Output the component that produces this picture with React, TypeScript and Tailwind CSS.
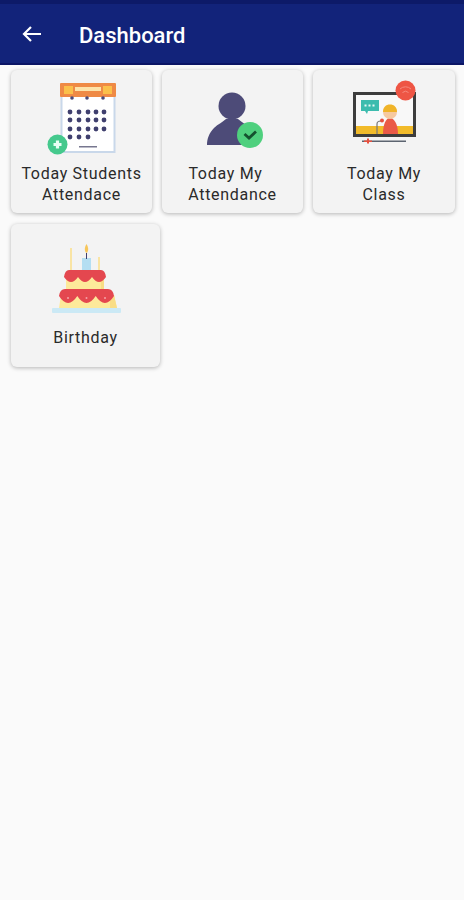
import { ReactNode } from "react";

function CalendarIcon() {
  const dots: [number, number][] = [];
  [112, 120, 129].forEach((y) => {
    [69, 78, 87, 95, 103].forEach((x) => dots.push([x, y]));
  });
  [69, 78, 87].forEach((x) => dots.push([x, 137]));
  return (
    <svg viewBox="31 82 100 80" className="w-[100px] h-[80px]">
      <rect x="60.500" y="90" width="53" height="62" fill="#fff" stroke="#c9d8ea" strokeWidth="2" />
      <rect x="59" y="83" width="56" height="14" rx="1" fill="#ef8a45" />
      <rect x="63" y="86" width="9" height="8" fill="#fbc04a" />
      <rect x="102" y="86" width="9" height="8" fill="#fbc04a" />
      <rect x="74" y="87" width="26" height="4" fill="#fde3a8" />
      <circle cx="71" cy="98" r="1.800" fill="#4a4a78" />
      <circle cx="86" cy="98" r="1.800" fill="#4a4a78" />
      <circle cx="102" cy="98" r="1.800" fill="#4a4a78" />
      {dots.map(([x, y]) => (
        <circle key={`${x}-${y}`} cx={x} cy={y} r="2.400" fill="#3f3f6e" />
      ))}
      <rect x="78" y="146" width="18" height="1.500" fill="#77778f" />
      <circle cx="56.500" cy="144.500" r="10" fill="#45c98d" />
      <path d="M56.500 140.500v8M52.500 144.500h8" stroke="#e9fff5" strokeWidth="3.200" />
    </svg>
  );
}

function PersonIcon() {
  return (
    <svg viewBox="182 82 100 80" className="w-[100px] h-[80px]">
      <ellipse cx="231" cy="106" rx="13.500" ry="13.500" fill="#4d4b78" />
      <path d="M206 145c0-6 2-12 7-17c4-4 9-6 12-9h12c3 3 8 5 12 9c5 5 5 11 5 17z" fill="#4d4b78" />
      <circle cx="249" cy="135" r="13" fill="#4fd07e" />
      <path d="M243.500 134l4.500 4 7-6.500" fill="none" stroke="#14522f" strokeWidth="2.800" />
    </svg>
  );
}

function ClassIcon() {
  return (
    <svg viewBox="334 82 100 80" className="w-[100px] h-[80px] overflow-visible">
      <rect x="354.500" y="93.500" width="60" height="42" fill="#f8f8f8" stroke="#3d3d3d" strokeWidth="3" />
      <rect x="356" y="126" width="57" height="8" fill="#f2bb2a" />
      <path d="M361 100h18v11h-11l-1 3-2-3h-4z" fill="#3cbcae" />
      <path d="M364.500 105.500h11" stroke="#e8f8f5" strokeWidth="2" strokeDasharray="2 2" />
      <path d="M383 134c0-10 3-16 7-16s8 6 8 16z" fill="#ea5a47" />
      <circle cx="390" cy="112" r="7" fill="#f6c9a0" />
      <path d="M383 112c0-5 3-7.500 7-7.500s7 2.500 7 7.500z" fill="#f0b429" />
      <path d="M377 134v-10c0-3 3-3 4-3" fill="none" stroke="#777" strokeWidth="1.200" />
      <circle cx="382" cy="120.500" r="2" fill="#e8503f" />
      <rect x="362" y="140.500" width="44" height="1.500" fill="#5c6470" />
      <rect x="367" y="138.500" width="2" height="5" fill="#e8503f" />
      <rect x="364" y="140.500" width="8" height="1.500" fill="#e8503f" />
      <circle cx="405.500" cy="90.500" r="10" fill="#ee5544" />
      <path d="M400 89a8 8 0 0 1 11 0M402.500 92.500a4.500 4.500 0 0 1 6 0" fill="none" stroke="#f58a7d" strokeWidth="1" />
    </svg>
  );
}

function CakeIcon() {
  return (
    <svg viewBox="36 236 100 80" className="w-[100px] h-[80px]">
      <path d="M71 248v22M99 257v13" stroke="#fbe08a" strokeWidth="1.500" />
      <rect x="82" y="258" width="9" height="13" fill="#b4def2" />
      <path d="M86.500 253v6" stroke="#3f3f6e" strokeWidth="1" />
      <path d="M86.500 244c2 3 2.500 7 0 9c-2.500-2-2-6 0-9z" fill="#f7c65a" />
      <path d="M66 276h38v15H66z" fill="#fde99a" />
      <path d="M61 295h53l3 13H59z" fill="#fde99a" />
      <path d="M101 276h3v15h-3zM110 295h4l3 13h-7z" fill="#f9dd85" />
      <path d="M64 277Q65 270 69 270H101Q105 270 106 277Q99 287 92 277Q85 287 78 277Q71 287 64 277z" fill="#e4474f" />
      <path d="M59 296Q60 289 65 289H108Q113 289 114 296Q105 310 95.700 296Q86.500 310 77.300 296Q68 310 59 296z" fill="#e4474f" />
      <circle cx="68" cy="298" r="1" fill="#f4a2a6" />
      <circle cx="86.500" cy="298" r="1" fill="#f4a2a6" />
      <circle cx="105" cy="298" r="1" fill="#f4a2a6" />
      <rect x="52" y="308" width="69" height="5" rx="1" fill="#cbe9f5" />
    </svg>
  );
}

function Card({ icon, lines, w, gap }: { icon: ReactNode; lines: ReactNode[]; w: string; gap: string }) {
  return (
    <div className={`${w} pt-[12px] h-[143px] bg-[#f3f3f3] rounded-md shadow-[0_1px_4px_rgba(0,0,0,0.28)] flex flex-col items-center`}>
      {icon}
      <div className={`${gap} text-center text-[16px] leading-[21px] tracking-[0.7px] text-[#2a2a2a]`}>
        {lines.map((l, i) => (
          <div key={i} className="whitespace-pre">{l}</div>
        ))}
      </div>
    </div>
  );
}

export default function App() {
  return (
    <div className="w-[464px] h-[900px] bg-[#fafafa] font-['Roboto',sans-serif]">
      <div className="h-[65px] bg-[#12237a] border-b-2 border-[#0b1565] flex flex-col">
        <div className="h-[4px] bg-[#0d1a68]" />
        <div className="flex-1 flex items-center pl-[20px]">
          <svg viewBox="0 0 24 24" className="w-[24px] h-[24px] mr-[35px] mt-[1px]" fill="none" stroke="#fff" strokeWidth="2.200">
            <path d="M21 12H4M11 5l-7 7 7 7" />
          </svg>
          <span className="text-white text-[22px] font-medium mt-[3px]">Dashboard</span>
        </div>
      </div>
      <div className="pl-[11px] pt-[5px] flex flex-wrap gap-x-[10px] gap-y-[11px] w-[464px]">
        <Card w="w-[141px]" gap="mt-[1px]" icon={<CalendarIcon />} lines={["Today Students", "Attendace"]} />
        <Card w="w-[141px]" gap="mt-[1px]" icon={<PersonIcon />} lines={["Today My\u00a0\u00a0\u00a0", "Attendance"]} />
        <Card w="w-[142px]" gap="mt-[1px]" icon={<ClassIcon />} lines={["Today My", "Class"]} />
        <Card w="w-[149px]" gap="mt-[11px]" icon={<CakeIcon />} lines={["Birthday"]} />
      </div>
    </div>
  );
}
